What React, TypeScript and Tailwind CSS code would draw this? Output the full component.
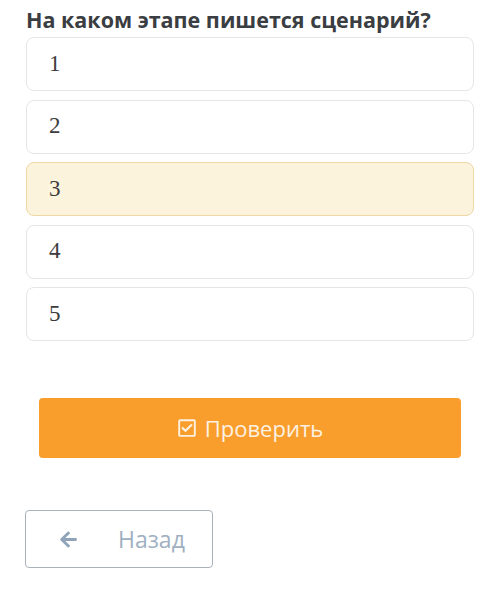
import React from "react";
import { FaRegCheckSquare, FaArrowLeft } from "react-icons/fa";

const options = ["1", "2", "3", "4", "5"];

export default function App() {
  const selected = "3";
  return (
    <div className="w-[500px] h-[595px] bg-white font-['Open_Sans',sans-serif]">
      <div className="pl-[26px] pr-[26px] pt-[6px]">
        <h1 className="text-[21.5px] leading-[28px] font-bold text-[#3a3d41]">
          На каком этапе пишется сценарий?
        </h1>
        <div className="mt-[3px] flex flex-col gap-[8.5px]">
          {options.map((o) => (
            <div
              key={o}
              className={`h-[54px] rounded-[8px] border flex items-center pl-[22px] ${
                o === selected
                  ? "bg-[#fcf3dd] border-[#eed9a6]"
                  : "bg-white border-[#e6e6e6]"
              }`}
            >
              <span className="font-['Liberation_Serif',serif] text-[23px] text-[#3c3c3c]">
                {o}
              </span>
            </div>
          ))}
        </div>
      </div>
      <div className="px-[39px] mt-[57px]">
        <button className="w-full h-[60px] rounded-[4px] bg-[#f99e2c] flex items-center justify-center gap-[8px] text-[#fdf1e2] text-[22px]">
          <FaRegCheckSquare className="w-[20px] h-[20px]" />
          <span>Проверить</span>
        </button>
      </div>
      <div className="pl-[25px] mt-[52px]">
        <button className="w-[188px] h-[58px] rounded-[4px] border border-[#a9b1ba] bg-white flex items-center text-[#9fb0c1] text-[23px]">
          <FaArrowLeft className="ml-[33px] w-[19px] h-[19px] text-[#8fa4b8]" />
          <span className="ml-[40px]">Назад</span>
        </button>
      </div>
    </div>
  );
}
